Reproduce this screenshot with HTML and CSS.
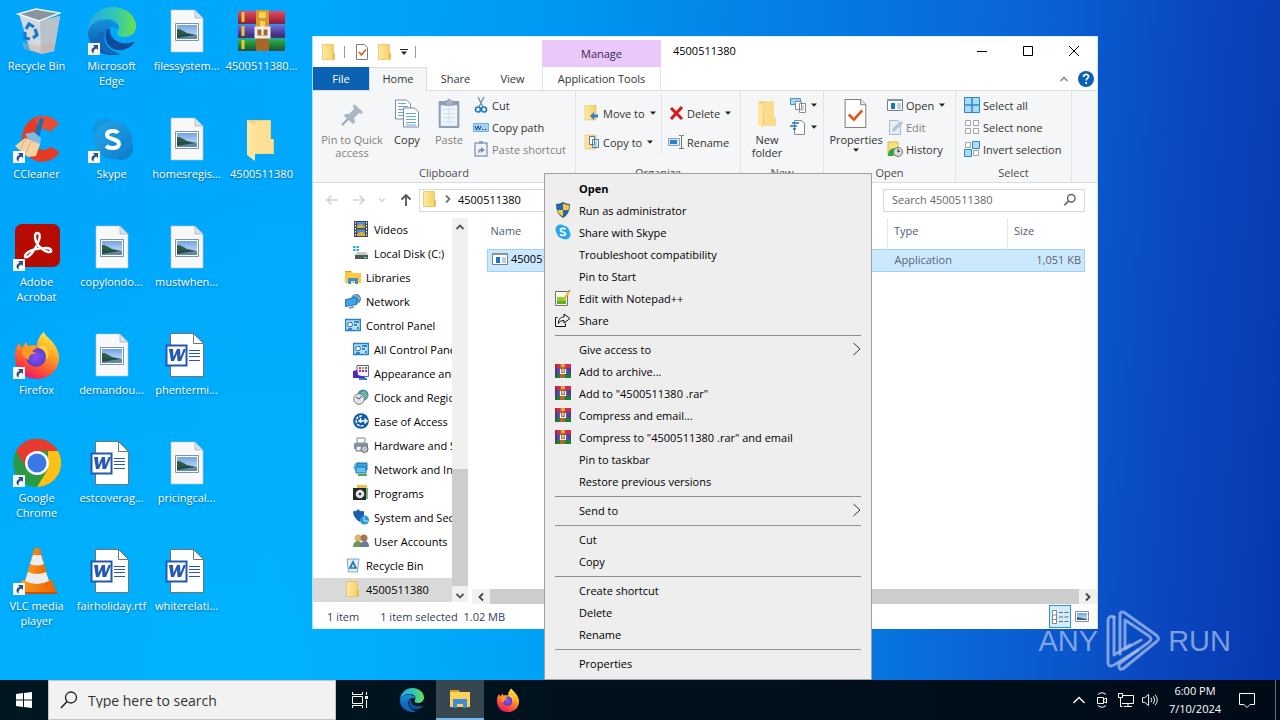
FILE: index.html
```html
<!DOCTYPE html>
<html lang="en">
<head>
<meta charset="utf-8">
<title>4500511380</title>
<link rel="stylesheet" href="styles.css">
</head>
<body>
<svg class="defs" aria-hidden="true">
  <defs>
    <linearGradient id="gFolder" x1="0" x2="1"><stop offset="0" stop-color="#ffe9a2"/><stop offset="1" stop-color="#f5cf62"/></linearGradient>
    <linearGradient id="gEdgeTop" x1="0" x2="1"><stop offset="0" stop-color="#2aa9e4"/><stop offset=".55" stop-color="#2fc6b8"/><stop offset="1" stop-color="#6be04a"/></linearGradient>
    <linearGradient id="gEdgeLow" x1="0" y1="0" x2="0" y2="1"><stop offset="0" stop-color="#1590dc"/><stop offset="1" stop-color="#0b4fa0"/></linearGradient>
    <linearGradient id="gFire" x1=".8" y1="0" x2=".3" y2="1"><stop offset="0" stop-color="#fff24a"/><stop offset=".4" stop-color="#ffa322"/><stop offset=".75" stop-color="#ff4a38"/><stop offset="1" stop-color="#e91574"/></linearGradient>
    <radialGradient id="gGlobe"><stop offset="0" stop-color="#8a4dff"/><stop offset="1" stop-color="#5b3fc4"/></radialGradient>
    <linearGradient id="gSkype" x1="0" y1="0" x2="1" y2="1"><stop offset="0" stop-color="#22a7ea"/><stop offset="1" stop-color="#0d7ccc"/></linearGradient>
    <linearGradient id="gSky" x1="0" y1="0" x2="0" y2="1"><stop offset="0" stop-color="#6fa4e4"/><stop offset="1" stop-color="#dceafa"/></linearGradient>
    <linearGradient id="gRed" x1="0" y1="0" x2="0" y2="1"><stop offset="0" stop-color="#e0506a"/><stop offset="1" stop-color="#96122e"/></linearGradient>
    <linearGradient id="gViolet" x1="0" y1="0" x2="0" y2="1"><stop offset="0" stop-color="#7a6ad8"/><stop offset="1" stop-color="#33206e"/></linearGradient>
    <linearGradient id="gGreen" x1="0" y1="0" x2="0" y2="1"><stop offset="0" stop-color="#38b04c"/><stop offset="1" stop-color="#0d5a24"/></linearGradient>
    <linearGradient id="gCone" x1="0" x2="1"><stop offset="0" stop-color="#ff9a1e"/><stop offset="1" stop-color="#e76400"/></linearGradient>
  </defs>
  <symbol id="arrow" viewBox="0 0 12 12"><path d="M0 0h12v12H0z" fill="#f6f8fa"/><path d="M5 2h5v5L8.300 5.500C6 6.500 5.300 8 5.600 10.500 2.800 9 2.600 5.500 6.600 3.700z" fill="#2d5086"/></symbol>
  <symbol id="bin" viewBox="0 0 48 48"><path d="M6 7l11 36 12 4 12-3 6-35-20 5z" fill="#d3d9de"/><path d="M27 14l20-5-6 35-13 3z" fill="#b9c1c9"/><path d="M5 7l18-5 24 4-21 8z" fill="#86959f" stroke="#f0f5f8" stroke-width="1.500"/><path d="M9 35l17 4 16-3-1 6-13 5-17-5z" fill="#cdb09f" opacity=".45"/><g fill="none" stroke="#1579cd" stroke-width="3.200"><path d="M13 22l3-5 5 3"/><path d="M22 22l2 6-4 3"/><path d="M17 32l-5-1 0-6"/></g></symbol>
  <symbol id="edge" viewBox="0 0 48 48"><path d="M0 25C0 10 11 0 25 0c13 0 23 9 23 19 0 7-5 11-12 11-5 0-7-2-7-4 0-2 2-3 2-6 0-4-5-8-12-8C9 12 2 17 0 25z" fill="url(#gEdgeTop)"/><path d="M0 25c2-8 9-12 17-12 9 0 14 5 14 9-6-5-15-1-15 8 0 8 7 15 17 17-4 1-7 1-9 1C10 48 0 38 0 25z" fill="url(#gEdgeLow)"/><path d="M19 22c-5 11 3 23 15 21 5-1 9-3 12-7 1-1 0-2-1-1-12 4-24-2-23-13z" fill="#0f4d98"/><path d="M17 25c-2 9 1 18 13 22-10 2-20-4-21-13-.600-5 3-9 8-9z" fill="#1169be"/></symbol>
  <symbol id="photo" viewBox="0 0 48 48"><path d="M8 3h24l8 8v34H8z" fill="#f8f8f9" stroke="#b9c3cb" stroke-width=".600"/><path d="M32 3v8h8z" fill="#d4e2ee" stroke="#a5b3be" stroke-width=".800"/><path d="M12.500 16.500h23v17h-23z" fill="#fff" stroke="#7e94ac"/><path d="M14 18h20v14H14z" fill="url(#gSky)"/><path d="M14 22c4 0 6 2 10 4l10 2v1H14z" fill="#2c5a48"/><path d="M14 28h20v4H14z" fill="#5f8ba6"/><path d="M14 27l18 1-18 3z" fill="#244c44"/></symbol>
  <symbol id="doc" viewBox="0 0 48 48"><path d="M7.500 2.500h23l10 10v33h-33z" fill="#fff" stroke="#6f7479"/><path d="M30.500 2.500v10h10z" fill="#fff" stroke="#6f7479"/><path d="M3.500 14.500h20v20h-20z" fill="#fff" stroke="#2458b3" stroke-width="2"/><path d="M6 18h4l.500 8 3.500-8h3l.500 8 3-8h2.500l-5 12h-3.500l-.500-7-3 7H8z" fill="#2458b3"/><path d="M26 19.500h11M26 22.500h11M26 25.500h11M26 29.500h11" stroke="#2458b3"/></symbol>
  <symbol id="rar" viewBox="0 0 48 48"><path d="M0 4h47v13H0z" fill="url(#gRed)"/><path d="M0 18h47v13H0z" fill="url(#gViolet)"/><path d="M0 32h47v12H0z" fill="url(#gGreen)"/><path d="M0 16h47M0 30h47M0 43h47" stroke="#5a4256"/><path d="M5 5v10M5 19v10M5 33v9" stroke="#e8c92a" stroke-width="3"/><path d="M18 3h13v41H18z" fill="#a9662a"/><path d="M18 3h13v19H18z" fill="#d69a2c"/><path d="M21 5h7v6h-7zM22 14h5v5h-5z" fill="#f4d05a"/><path d="M18 21h13v9H18z" fill="none" stroke="#eee" stroke-width="3"/><path d="M24.500 19v9" stroke="#fff" stroke-width="2"/></symbol>
  <symbol id="rar16" viewBox="0 0 16 16"><path d="M0 1h16v4H0z" fill="#d42a4f"/><path d="M0 5h16v6H0z" fill="#4a4ba6"/><path d="M0 11h16v4H0z" fill="#12853c"/><path d="M5 1h5v14H5z" fill="#b3652c"/><path d="M1 1v14M15 5v6" stroke="#6e2746"/><path d="M5.500 6v4.500h5V6M8 6v3" stroke="#fff" stroke-width="1.200" fill="none"/><path d="M6 1h4v3H6z" fill="#e8a242"/></symbol>
  <symbol id="cclean" viewBox="0 0 48 48"><path d="M46 9L37 17c-7-7-16-2-16 7 0 10 9 14 17 8l9 5C36 54 9 48 9 25 9 0 35-6 46 9z" fill="#e43a26"/><path d="M46 9L37 17c-4-4-8-4-11-2L22 3c8-4 18-2 24 6z" fill="#f05a3e" opacity=".6"/><path d="M27 3l4 1-6 22-6-2z" fill="#1c6fae"/><path d="M12 19l9-2 7 6-1 7-10-2z" fill="#83b7dd"/><path d="M2 31l10-8 15 6-4 12-8 1z" fill="#f5d2a0"/><path d="M12 24l-4 10M18 26l-5 12" stroke="#dfb27c"/></symbol>
  <symbol id="skype" viewBox="0 0 48 48"><circle cx="17" cy="16" r="12" fill="#1496dc"/><circle cx="33" cy="33" r="12" fill="#1281cb"/><circle cx="25" cy="25" r="19" fill="url(#gSkype)"/><path d="M30 18c-2-3-11-3-11 2 0 5 12 3 12 9 0 5-10 5-13 2" fill="none" stroke="#fff" stroke-width="4"/></symbol>
  <symbol id="folderBig" viewBox="0 0 48 48"><path d="M9 5h24v19h3v15H14z" fill="#f3cf70"/><path d="M17 6h15v18h3v14l-18 1z" fill="#fbe095"/><path d="M9 5l8 5v36l-8-6z" fill="#ffe69c"/></symbol>
  <symbol id="newFolder" viewBox="0 0 26 30"><path d="M4 3h16v16h2v8H7z" fill="#f0c45c"/><path d="M9 3h11v16h2v8H10z" fill="#fadd8c"/><path d="M4 3l5 3v24l-5-4z" fill="#ffe69c"/></symbol>
  <symbol id="acrobat" viewBox="0 0 48 48"><rect x="2" y="1" width="45" height="43" rx="7" fill="#b50b00"/><path d="M24 10c6 0 1 12-5 20-5 6-9 5-6 1 3-4 13-6 20-6 6 0 7 5 2 4-7-2-13-9-13-15 0-3 1-4 2-4z" fill="none" stroke="#fff" stroke-width="2.400"/></symbol>
  <symbol id="firefox" viewBox="0 0 48 48"><path d="M31 1c2 5 6 6 10 12 5 7 7 15 3 23-4 8-12 12-20 12C10 48 1 37 2 24c0-6 2-9 4-12l3 5 4-6 2 5c4-2 7-2 9-1 0-6 3-11 7-14z" fill="url(#gFire)"/><circle cx="23" cy="26" r="10" fill="url(#gGlobe)"/><path d="M10 16c5-2 10-2 14 1l-5 3 5 3c-6-1-9 2-8 6-6-2-8-7-6-13z" fill="#ff9a20"/><path d="M24 17c7 0 10 5 9 12 4-4 3-13-3-15z" fill="#ffcf39"/></symbol>
  <symbol id="chrome" viewBox="0 0 48 48"><circle cx="24" cy="24" r="24" fill="#2b9a47"/><path d="M3 12A24 24 0 0 1 45 12H24L14 30z" fill="#e63b2e"/><path d="M45 12A24 24 0 0 1 24 48l11-18V12z" fill="#fbc116"/><circle cx="24" cy="24" r="12" fill="#fff"/><circle cx="24" cy="24" r="9.500" fill="#3b78e7"/></symbol>
  <symbol id="vlc" viewBox="0 0 48 48"><path d="M9 33h30l5 13H4z" fill="url(#gCone)"/><path d="M21 2q3-3 6 0l10 36q-13 7-26 0z" fill="url(#gCone)"/><path d="M20 8h8l3 9q-7 3-14 0zM15 25q9 4 18 0l3 9q-12 6-24 0z" fill="#ececec"/><path d="M4 45h40v2H4z" fill="#ce5200"/></symbol>

  <symbol id="folder" viewBox="0 0 16 16"><path d="M1.500 .500h11v9h1v6h-12z" fill="url(#gFolder)" stroke="#e4bc52" stroke-width=".700"/><path d="M12.500 9v6" stroke="#dcae3b"/></symbol>
  <symbol id="check" viewBox="0 0 16 16"><path d="M2.500.500h8l3 3v12h-11z" fill="#fff" stroke="#7c7c7c"/><path d="M5 8l2.500 3L12 5.500" fill="none" stroke="#e0561f" stroke-width="1.600"/></symbol>
  <symbol id="checkBig" viewBox="0 0 24 30"><path d="M1.500 1.500h15l5 5v22h-20z" fill="#fff" stroke="#828282"/><path d="M16.500 1.500v5h5" fill="#eee" stroke="#828282"/><path d="M5 16l5 5 8-9" fill="none" stroke="#e65420" stroke-width="2.500"/></symbol>
  <symbol id="pin" viewBox="0 0 24 24"><path d="M14 1l9 8-2 2-2-1-5 5 1 4-2 2-9-8 1-2h4l5-5-1-3z" fill="#a9b6c4"/><path d="M8 16l-6 6" stroke="#97a5b4" stroke-width="2"/></symbol>
  <symbol id="copy" viewBox="0 0 26 30"><g fill="#fff" stroke="#7a8aa0"><path d="M1.500 1.500h11l4 4v15h-15z"/><path d="M9.500 9.500h11l4 4v15h-15z"/></g><path d="M4 5h8M4 8h10M4 11h5M4 14h5M4 17h5M12 15h10M12 18h10M12 21h10M12 24h10M12 26.500h10" stroke="#68a3df"/></symbol>
  <symbol id="paste" viewBox="0 0 24 30"><rect x="2" y="3" width="20" height="26" rx="1" fill="#8d9fb6"/><path d="M4 7h16v20H4z" fill="#eef4fb"/><path d="M8 3h2q2-4 4 0h2v4H8z" fill="#a5b3c4" stroke="#7b8da4" stroke-width=".700"/><path d="M6 11h12M6 15h12M6 19h12M6 23h12M12 8v18" stroke="#cfdbe8" stroke-width=".800"/></symbol>
  <symbol id="cut" viewBox="0 0 16 16"><path d="M5 0l5 10M11 0L6 10" stroke="#8997a5" stroke-width="1.500"/><circle cx="5" cy="12.500" r="2.500" fill="none" stroke="#1c7cc9" stroke-width="1.700"/><circle cx="11" cy="12.500" r="2.500" fill="none" stroke="#1c7cc9" stroke-width="1.700"/></symbol>
  <symbol id="path" viewBox="0 0 16 16"><path d="M.500 4.500h15v8H.500z" fill="#a5d4f7" stroke="#74aee0"/><path d="M2 7l1.500 4L5 7l1.500 4L8 7M9 10.500h1.500M12 10.500h1.500" fill="none" stroke="#1b4b80"/></symbol>
  <symbol id="pasteLink" viewBox="0 0 16 16"><path d="M2 2h12v13H2z" fill="#f0f4f9" stroke="#8fa1b8" stroke-width="1.500"/><path d="M6 0h4v3H6z" fill="#8fa1b8"/><path d="M5 13c0-4 1-5 3-5V6l4 3-4 3v-2c-1 0-2 1-3 3z" fill="#7890b0"/></symbol>
  <symbol id="moveTo" viewBox="0 0 16 16"><path d="M1 0h11v15H1z" fill="url(#gFolder)" stroke="#e1c067" stroke-width=".600"/><path d="M6 11l4-4v2.500h4v3h-4V15z" fill="#2e7fd2"/></symbol>
  <symbol id="copyTo" viewBox="0 0 16 16"><path d="M1 1h11v14H1z" fill="url(#gFolder)" stroke="#e1c067" stroke-width=".600"/><path d="M5.500 2.500h5v8h-5zM8.500 5.500h6v8h-6z" fill="#fff" stroke="#4c7eb4"/><path d="M10 8h3M10 10h3M10 12h3" stroke="#5d9bd8"/></symbol>
  <symbol id="del" viewBox="0 0 16 16"><path d="M3 3l11 11M14 2L3 14" stroke="#d9151f" stroke-width="3"/></symbol>
  <symbol id="rename" viewBox="0 0 16 16"><path d="M.500 4.500h11v7H.500z" fill="#d6e9fa" stroke="#8aa6c0"/><path d="M2 6h7v4H2z" fill="#2b7bd0"/><path d="M13.500 2v12M11 1.500h2l.500.500.500-.500h2M11 14.500h5" stroke="#6e7478" fill="none"/></symbol>
  <symbol id="newItem" viewBox="0 0 16 16"><path d="M.500 1.500h10v6H.500z" fill="#a9d3f3" stroke="#4d92c8"/><path d="M5.500 4.500h6v8h-6zM9.500 6.500h6v9h-6z" fill="#fff" stroke="#858b90"/><path d="M11 9h3M11 11h3M11 13h3" stroke="#aaa"/></symbol>
  <symbol id="easy" viewBox="0 0 16 16"><path d="M4.500 1.500h7l3 3v11h-10z" fill="#fff" stroke="#858b90"/><path d="M2 4h7M0 7h7M3 10h3" stroke="#1e70bf" stroke-width="1.300"/></symbol>
  <symbol id="app" viewBox="0 0 16 16"><path d="M.500 2.500h15v11H.500z" fill="#fff" stroke="#777f86"/><path d="M0 2h16v2H0z" fill="#8a949c"/><path d="M4 6h4v6H4z" fill="#1777cf"/><path d="M10 7h4M10 9h4M10 11h4" stroke="#7da0c0"/></symbol>
  <symbol id="edit" viewBox="0 0 16 16"><path d="M2.500 1.500h8l3 3v11h-11z" fill="#e5edf6" stroke="#aab9c9"/><path d="M5 13l1-4 8-7 2 2-8 8z" fill="#b5c4d4"/></symbol>
  <symbol id="history" viewBox="0 0 16 16"><path d="M1 1h10v13H1z" fill="#f6e37a" stroke="#d8b84c"/><path d="M1 15c0-5 2-8 8-8l-3 8z" fill="#28a745"/><circle cx="11" cy="11" r="4.500" fill="#d8dcda" stroke="#6c7675"/><path d="M11 8v3l2-1" stroke="#333" fill="none"/></symbol>
  <symbol id="selAll" viewBox="0 0 16 16"><path d="M.500.500h7.500v7.500H.500zM8 .500h7.500v7.500H8zM.500 8h7.500v7.500H.500zM8 8h7.500v7.500H8z" fill="#a9dcf9" stroke="#2e86c6"/></symbol>
  <symbol id="selNone" viewBox="0 0 16 16"><path d="M1.500 1.500h5v5h-5zM9.500 1.500h5v5h-5zM1.500 9.500h5v5h-5zM9.500 9.500h5v5h-5z" fill="#fff" stroke="#a3a3a3"/></symbol>
  <symbol id="selInv" viewBox="0 0 16 16"><path d="M1.500 1.500h5v5h-5zM9.500 9.500h5v5h-5z" fill="#fff" stroke="#a3a3a3"/><path d="M8.500.500h7v7h-7zM.500 8.500h7v7h-7z" fill="#a9dcf9" stroke="#2e86c6"/></symbol>

  <symbol id="videos" viewBox="0 0 16 16"><path d="M1 0h14v16H1z" fill="#45484e"/><path d="M4 1h8v6H4z" fill="#4b8fe0"/><path d="M4 5l4-2 4 3v1H4zM4 13l4-3 4 2v3H4z" fill="#d9b13a"/><path d="M4 8.500h8V12l-4-2-4 3z" fill="#4b8fe0"/><path d="M2.500 1v14M13.500 1v14" stroke="#fff" stroke-dasharray="1.500 1.500"/></symbol>
  <symbol id="disk" viewBox="0 0 16 16"><path d="M0 1h2.500v2H0zM3.500 1H6v2H3.500zM0 4h2.500v2H0zM3.500 4H6v2H3.500z" fill="#21b5c8"/><path d="M4 7h9l2 3H2z" fill="#c3c9ce"/><path d="M2 10h13v4H2z" fill="#50585e"/><path d="M11 12.500h3" stroke="#6be37a"/></symbol>
  <symbol id="lib" viewBox="0 0 16 16"><path d="M0 2h6l1 2h9v10H0z" fill="#fac93e"/><path d="M0 2h6l1 1H0z" fill="#d99d20"/><path d="M3 9h10v6h-3v-3H6v3H3z" fill="#3f8fd6"/></symbol>
  <symbol id="net" viewBox="0 0 16 16"><circle cx="11" cy="6" r="5" fill="#5b93b4"/><path d="M9 2c3 1 4 4 6 3" stroke="#b9dcec" fill="none"/><path d="M.500 6.500l11-2v7l-11 2z" fill="#3fa5e8" stroke="#2277b3"/><path d="M4 15l5-1" stroke="#6e8797" stroke-width="1.500"/></symbol>
  <symbol id="cpl" viewBox="0 0 16 16"><path d="M.500 2.500h15v11H.500z" fill="#b4e2fb" stroke="#2683be" stroke-width="1.500"/><circle cx="5" cy="7.500" r="2.500" fill="#eef" stroke="#1d6ca6"/><path d="M9 5h5M9 8h3M12 11h2M3 12h4" stroke="#176aab" stroke-width="1.500"/></symbol>
  <symbol id="appear" viewBox="0 0 16 16"><path d="M4 .500h11.500v11H4z" fill="#f1f4fc" stroke="#5268bb"/><path d="M6 2h2v2H6z" fill="#e33"/><path d="M9 2h2v2H9z" fill="#f90"/><path d="M12 2h2v2h-2z" fill="#393"/><path d="M6 5h2v2H6zM9 5h2v2H9zM12 5h2v2h-2z" fill="#93c"/><path d="M0 6l4-1 1 5 7 2v1H0z" fill="#5427b8"/><path d="M6 14h8" stroke="#2d84d0" stroke-width="2"/></symbol>
  <symbol id="clockI" viewBox="0 0 16 16"><circle cx="10" cy="6" r="5.500" fill="#388abb"/><path d="M7 3l5-1 3 5-3 3z" fill="#76b68c"/><circle cx="6" cy="10" r="5.300" fill="#dfe5e9" stroke="#7a8288"/><path d="M3 8l3 2 3-3" fill="none" stroke="#30485c"/></symbol>
  <symbol id="ease" viewBox="0 0 16 16"><circle cx="8" cy="8" r="7.800" fill="#0b59a8"/><path d="M7.500 5v5M5 8h9M11.500 5.500L14 8l-2.500 2.500" stroke="#fff" stroke-width="1.500" fill="none"/><path d="M9 3a5 5 0 1 0 1.500 9.300" fill="none" stroke="#fff" stroke-width="1.500" stroke-dasharray="3 1"/></symbol>
  <symbol id="printer" viewBox="0 0 16 16"><path d="M4 1h8v5H4z" fill="#fff" stroke="#7b8790"/><path d="M1 6h14v6H1z" fill="#8c959c"/><path d="M3 9h9v5H3z" fill="#eceff1" stroke="#697279"/><circle cx="11.500" cy="12" r="3.500" fill="#bbc4ca" stroke="#606a72"/></symbol>
  <symbol id="netInt" viewBox="0 0 16 16"><circle cx="5" cy="6" r="4.500" fill="#72b6dc"/><path d="M4 2h10v7H4z" fill="#3ba3e3" stroke="#1d75b1"/><path d="M3 6h10v6H3z" fill="#64c0ef" stroke="#1d75b1"/><path d="M5 14h9" stroke="#46ad55" stroke-width="2"/></symbol>
  <symbol id="programs" viewBox="0 0 16 16"><path d="M4 0h10v10H4z" fill="#f2bd51"/><path d="M0 3h13v12H0z" fill="#25292b"/><circle cx="7" cy="9" r="4.300" fill="#dde4e3"/><circle cx="7" cy="9" r="1.300" fill="#25292b"/><path d="M14 3v11" stroke="#43a662" stroke-width="1.500"/></symbol>
  <symbol id="system" viewBox="0 0 16 16"><path d="M0 2q4 1 5-2 2 3 6 2 1 7-4 11-7-4-7-11z" fill="#185fad"/><circle cx="11.500" cy="11" r="4.500" fill="#2799d9"/><path d="M11 8v4h4" stroke="#c6ecff" fill="none"/></symbol>
  <symbol id="users" viewBox="0 0 16 16"><circle cx="5" cy="5" r="3.500" fill="#d9b775"/><circle cx="11" cy="5" r="3.500" fill="#a77450"/><path d="M0 14q0-6 5-6 4 0 4 6z" fill="#6b9c4a"/><path d="M7 14q0-6 5-6 4 0 4 6z" fill="#6d7a9e"/></symbol>
  <symbol id="binS" viewBox="0 0 16 16"><path d="M2 2h12l-1.500 13h-9z" fill="#e2edf5" stroke="#8ea5b5"/><path d="M8 5l3 6H5z" fill="none" stroke="#2178c5" stroke-width="1.700"/></symbol>

  <symbol id="shield" viewBox="0 0 16 16"><path d="M8 0q3 2 7 2 0 10-7 14Q1 12 1 2q4 0 7-2z" fill="#345979"/><path d="M8 1.500V8H2.500Q2 5 2 3q3 0 6-1.500zM8 8h5.500Q12 12 8 14.500z" fill="#1c69ba"/><path d="M8 1.500Q11 3 14 3q0 3-.500 5H8zM2.500 8H8v6.500Q3 12 2.500 8z" fill="#fcc53b"/></symbol>
  <symbol id="skypeS" viewBox="0 0 16 16"><circle cx="5.500" cy="5.500" r="5" fill="#28a8ea"/><circle cx="10.500" cy="10.500" r="5" fill="#28a8ea"/><circle cx="8" cy="8" r="6.500" fill="#28a8ea"/><path d="M10.500 5.500c-1-1.500-5-1.500-5 .700 0 2.300 5 1.200 5 3.600 0 2.200-4 2.200-5.300.500" fill="none" stroke="#fff" stroke-width="1.700"/></symbol>
  <symbol id="npp" viewBox="0 0 16 16"><path d="M.500 1.500h12v14H.500z" fill="#fafbe9" stroke="#717b72"/><path d="M2 7h9v7H2z" fill="#8ed032"/><path d="M2 11h9v3H2z" fill="#5fae26"/><path d="M1 1.500h11" stroke="#555" stroke-dasharray="1 1"/><path d="M8 9l5-8 2 1-5 8z" fill="#f0b43c"/><path d="M13 1l2-1v2z" fill="#b0342a"/></symbol>
  <symbol id="share" viewBox="0 0 16 16"><path d="M2.500 5.500h-2v9h10v-3M9 2l6 4.500L9 11V8.500C6 8.500 4.500 9.500 3.500 11.500 3.500 7.500 5 5 9 5z" fill="none" stroke="#111"/></symbol>
  <symbol id="mag" viewBox="0 0 16 16"><circle cx="9.500" cy="6" r="4.300" fill="none" stroke="currentColor" stroke-width="1.600"/><path d="M6.500 9L1.500 14" stroke="currentColor" stroke-width="2"/></symbol>
  <symbol id="up" viewBox="0 0 10 10"><path d="M1.500 7L5 3.500 8.500 7" fill="none" stroke="currentColor" stroke-width="1.800"/></symbol>
  <symbol id="down" viewBox="0 0 10 10"><path d="M1.500 3L5 6.500 8.500 3" fill="none" stroke="currentColor" stroke-width="1.800"/></symbol>
  <symbol id="left" viewBox="0 0 10 10"><path d="M7 1.500L3.500 5 7 8.500" fill="none" stroke="currentColor" stroke-width="1.800"/></symbol>
  <symbol id="right" viewBox="0 0 10 10"><path d="M3 1.500L6.500 5 3 8.500" fill="none" stroke="currentColor" stroke-width="1.800"/></symbol>
  <symbol id="sub" viewBox="0 0 8 14"><path d="M.500 1L7 7 .500 13" fill="none" stroke="#333"/></symbol>
  <symbol id="caret" viewBox="0 0 6 4"><path d="M0 .500h6L3 3.800z" fill="#222"/></symbol>
</svg>

<div class="screen">
  <main class="desktop">
    <ul class="icons">
      <li><a href="#"><span class="pic"><svg><use href="#bin"/></svg></span>Recycle Bin</a></li>
      <li><a href="#"><span class="pic"><svg><use href="#cclean"/></svg><svg class="link"><use href="#arrow"/></svg></span>CCleaner</a></li>
      <li><a href="#"><span class="pic"><svg><use href="#acrobat"/></svg><svg class="link"><use href="#arrow"/></svg></span>Adobe Acrobat</a></li>
      <li><a href="#"><span class="pic"><svg><use href="#firefox"/></svg><svg class="link"><use href="#arrow"/></svg></span>Firefox</a></li>
      <li><a href="#"><span class="pic"><svg><use href="#chrome"/></svg><svg class="link"><use href="#arrow"/></svg></span>Google Chrome</a></li>
      <li><a href="#"><span class="pic"><svg><use href="#vlc"/></svg><svg class="link"><use href="#arrow"/></svg></span>VLC media player</a></li>
      <li><a href="#"><span class="pic"><svg><use href="#edge"/></svg><svg class="link"><use href="#arrow"/></svg></span>Microsoft Edge</a></li>
      <li><a href="#"><span class="pic"><svg><use href="#skype"/></svg><svg class="link"><use href="#arrow"/></svg></span>Skype</a></li>
      <li><a href="#"><span class="pic"><svg><use href="#photo"/></svg></span>copylondo...</a></li>
      <li><a href="#"><span class="pic"><svg><use href="#photo"/></svg></span>demandou...</a></li>
      <li><a href="#"><span class="pic"><svg><use href="#doc"/></svg></span>estcoverag...</a></li>
      <li><a href="#"><span class="pic"><svg><use href="#doc"/></svg></span>fairholiday.rtf</a></li>
      <li><a href="#"><span class="pic"><svg><use href="#photo"/></svg></span>filessystem...</a></li>
      <li><a href="#"><span class="pic"><svg><use href="#photo"/></svg></span>homesregis...</a></li>
      <li><a href="#"><span class="pic"><svg><use href="#photo"/></svg></span>mustwhen...</a></li>
      <li><a href="#"><span class="pic"><svg><use href="#doc"/></svg></span>phentermi...</a></li>
      <li><a href="#"><span class="pic"><svg><use href="#photo"/></svg></span>pricingcal...</a></li>
      <li><a href="#"><span class="pic"><svg><use href="#doc"/></svg></span>whiterelati...</a></li>
      <li><a href="#"><span class="pic"><svg><use href="#rar"/></svg></span>4500511380...</a></li>
      <li><a href="#"><span class="pic"><svg><use href="#folderBig"/></svg></span>4500511380</a></li>
    </ul>

    <section class="window">
      <header class="titlebar">
        <div class="quick">
          <svg class="i16"><use href="#folder"/></svg><i class="bar"></i>
          <button class="icon" aria-label="Properties"><svg class="i16"><use href="#check"/></svg></button>
          <button class="icon" aria-label="New folder"><svg class="i16"><use href="#folder"/></svg></button>
          <button class="icon" aria-label="Customize"><svg class="cust" viewBox="0 0 8 6"><path d="M0 .500h8" stroke="#222"/><path d="M1 2.500h6L4 6z" fill="#222"/></svg></button><i class="bar"></i>
        </div>
        <div class="manage">Manage</div>
        <h1>4500511380</h1>
        <div class="winctl">
          <button aria-label="Minimize"><svg viewBox="0 0 12 12"><path d="M1 6.500h10" stroke="#000"/></svg></button>
          <button aria-label="Maximize"><svg viewBox="0 0 12 12"><path d="M1.500 1.500h9v9h-9z" fill="none" stroke="#000"/></svg></button>
          <button aria-label="Close"><svg viewBox="0 0 12 12"><path d="M1 1l10 10M11 1L1 11" stroke="#000"/></svg></button>
        </div>
      </header>
      <nav class="tabs">
        <button class="file">File</button><button class="home">Home</button><button class="tab">Share</button><button class="tab">View</button>
        <button class="tools">Application Tools</button>
        <div class="help"><svg class="i10"><use href="#up"/></svg><svg class="i16" viewBox="0 0 16 16"><circle cx="8" cy="8" r="8" fill="#0a62b8"/><path d="M5.500 6c0-3.500 5-3.300 5-.500 0 1.800-2.300 1.800-2.300 4M8.200 11v2" stroke="#fff" stroke-width="1.700" fill="none"/></svg></div>
      </nav>
      <div class="ribbon">
        <div class="group g-clip">
          <div class="tools-row">
            <button class="big off wide"><svg class="pinpic"><use href="#pin"/></svg>Pin to Quick access</button>
            <button class="big"><svg><use href="#copy"/></svg>Copy</button>
            <button class="big off narrow"><svg><use href="#paste"/></svg>Paste</button>
            <div class="stack"><button><svg><use href="#cut"/></svg>Cut</button><button><svg><use href="#path"/></svg>Copy path</button><button class="off"><svg><use href="#pasteLink"/></svg>Paste shortcut</button></div>
          </div>
          <div class="cap">Clipboard</div>
        </div>
        <div class="group g-org">
          <div class="tools-row">
            <div class="stack two first"><button><svg><use href="#moveTo"/></svg>Move to<svg class="car"><use href="#caret"/></svg></button><button><svg><use href="#copyTo"/></svg>Copy to<svg class="car"><use href="#caret"/></svg></button></div>
            <div class="stack two"><button><svg><use href="#del"/></svg>Delete<svg class="car"><use href="#caret"/></svg></button><button><svg><use href="#rename"/></svg>Rename</button></div>
          </div>
          <div class="cap">Organize</div>
        </div>
        <div class="group g-new">
          <div class="tools-row">
            <button class="big"><svg><use href="#newFolder"/></svg>New folder</button>
            <div class="stack"><button aria-label="New item"><svg><use href="#newItem"/></svg><svg class="car"><use href="#caret"/></svg></button><button aria-label="Easy access"><svg><use href="#easy"/></svg><svg class="car"><use href="#caret"/></svg></button></div>
          </div>
          <div class="cap">New</div>
        </div>
        <div class="group g-open">
          <div class="tools-row">
            <button class="big props"><svg><use href="#checkBig"/></svg>Properties<svg class="car"><use href="#caret"/></svg></button>
            <div class="stack"><button><svg><use href="#app"/></svg>Open<svg class="car"><use href="#caret"/></svg></button><button class="off"><svg><use href="#edit"/></svg>Edit</button><button><svg><use href="#history"/></svg>History</button></div>
          </div>
          <div class="cap">Open</div>
        </div>
        <div class="group g-sel">
          <div class="tools-row">
            <div class="stack"><button><svg><use href="#selAll"/></svg>Select all</button><button><svg><use href="#selNone"/></svg>Select none</button><button><svg><use href="#selInv"/></svg>Invert selection</button></div>
          </div>
          <div class="cap">Select</div>
        </div>
      </div>
      <div class="address">
        <div class="moves">
          <button class="dim" aria-label="Back"><svg viewBox="0 0 14 14"><path d="M13 7H2M6.500 2.500L2 7l4.500 4.500" fill="none" stroke="currentColor" stroke-width="1.500"/></svg></button>
          <button class="dim" aria-label="Forward"><svg viewBox="0 0 14 14"><path d="M1 7h11M7.500 2.500L12 7l-4.500 4.500" fill="none" stroke="currentColor" stroke-width="1.500"/></svg></button>
          <button class="dim slim" aria-label="Recent"><svg><use href="#down"/></svg></button>
          <button aria-label="Up"><svg viewBox="0 0 14 14"><path d="M7 13V2M2.500 6.500L7 2l4.500 4.500" fill="none" stroke="#555" stroke-width="1.800"/></svg></button>
        </div>
        <div class="crumbs"><svg class="i16"><use href="#folder"/></svg><svg class="i10"><use href="#right"/></svg><span>4500511380</span></div>
        <label class="find"><input type="text" placeholder="Search 4500511380" aria-label="Search 4500511380"><svg class="i14"><use href="#mag"/></svg></label>
      </div>
      <div class="body">
        <ul class="tree">
          <li class="in"><a href="#"><svg><use href="#videos"/></svg>Videos</a></li>
          <li class="in"><a href="#"><svg><use href="#disk"/></svg>Local Disk (C:)</a></li>
          <li><a href="#"><svg><use href="#lib"/></svg>Libraries</a></li>
          <li><a href="#"><svg><use href="#net"/></svg>Network</a></li>
          <li><a href="#"><svg><use href="#cpl"/></svg>Control Panel</a></li>
          <li class="in"><a href="#"><svg><use href="#cpl"/></svg>All Control Panel Items</a></li>
          <li class="in"><a href="#"><svg><use href="#appear"/></svg>Appearance and Personalization</a></li>
          <li class="in"><a href="#"><svg><use href="#clockI"/></svg>Clock and Region</a></li>
          <li class="in"><a href="#"><svg><use href="#ease"/></svg>Ease of Access</a></li>
          <li class="in"><a href="#"><svg><use href="#printer"/></svg>Hardware and Sound</a></li>
          <li class="in"><a href="#"><svg><use href="#netInt"/></svg>Network and Internet</a></li>
          <li class="in"><a href="#"><svg><use href="#programs"/></svg>Programs</a></li>
          <li class="in"><a href="#"><svg><use href="#system"/></svg>System and Security</a></li>
          <li class="in"><a href="#"><svg><use href="#users"/></svg>User Accounts</a></li>
          <li><a href="#"><svg><use href="#binS"/></svg>Recycle Bin</a></li>
          <li class="on"><a href="#"><svg><use href="#folder"/></svg>4500511380</a></li>
        </ul>
        <div class="vbar"><svg class="i10"><use href="#up"/></svg><i></i><svg class="i10"><use href="#down"/></svg></div>
        <div class="files">
          <table>
            <thead><tr><th>Name</th><th class="type">Type</th><th class="size">Size</th></tr></thead>
            <tbody><tr><td class="name"><svg class="i16"><use href="#app"/></svg>4500511380</td><td>Application</td><td class="num">1,051 KB</td></tr></tbody>
          </table>
          <div class="hbar"><svg class="i10"><use href="#left"/></svg><i></i><svg class="i10"><use href="#right"/></svg></div>
        </div>
      </div>
      <footer class="status">
        <span>1 item</span><span class="sel">1 item selected&nbsp; 1.02 MB</span>
        <button class="view on" aria-label="Details"><svg viewBox="0 0 18 16"><path d="M1.500 1.500h4v13h-4zM1.500 6h4M1.500 10.500h4" stroke="#888" fill="#fff"/><path d="M8 3.500h4M13.500 3.500h4M8 8h4M13.500 8h4M8 12.500h4M13.500 12.500h4" stroke="#667"/></svg></button>
        <button class="view" aria-label="Large icons"><svg viewBox="0 0 18 16"><path d="M2.500 2.500h13v10h-13z" stroke="#8a8f96" fill="#fff"/><path d="M4 4h10v7H4z" fill="url(#gSky)"/><path d="M4 8l10 2v1H4z" fill="#3b6379"/></svg></button>
      </footer>
    </section>

    <div class="watermark"><span>ANY</span><svg viewBox="0 0 54 62"><g fill="none" stroke="currentColor" stroke-width="3" stroke-linejoin="round" stroke-linecap="round"><path d="M8 7Q2 5 2 11v41q0 6 6 3l24-15"/><path d="M8 7v38l16-10"/><path d="M14 44V5q0-5 5-2l31 22q5 4 0 7L18 58q-4 3-5-1v-3l30-22q4-3 0-6L19 10v29l16-9"/></g></svg><span>RUN</span></div>

    <menu class="context">
      <li><button class="bold">Open</button></li>
      <li><button><svg><use href="#shield"/></svg>Run as administrator</button></li>
      <li><button><svg><use href="#skypeS"/></svg>Share with Skype</button></li>
      <li><button>Troubleshoot compatibility</button></li>
      <li><button>Pin to Start</button></li>
      <li><button><svg><use href="#npp"/></svg>Edit with Notepad++</button></li>
      <li><button><svg><use href="#share"/></svg>Share</button></li>
      <li class="sep"></li>
      <li><button>Give access to<svg class="more"><use href="#sub"/></svg></button></li>
      <li><button><svg><use href="#rar16"/></svg>Add to archive...</button></li>
      <li><button><svg><use href="#rar16"/></svg>Add to "4500511380 .rar"</button></li>
      <li><button><svg><use href="#rar16"/></svg>Compress and email...</button></li>
      <li><button><svg><use href="#rar16"/></svg>Compress to "4500511380 .rar" and email</button></li>
      <li><button>Pin to taskbar</button></li>
      <li><button>Restore previous versions</button></li>
      <li class="sep"></li>
      <li><button>Send to<svg class="more"><use href="#sub"/></svg></button></li>
      <li class="sep"></li>
      <li><button>Cut</button></li>
      <li><button>Copy</button></li>
      <li class="sep"></li>
      <li><button>Create shortcut</button></li>
      <li><button>Delete</button></li>
      <li><button>Rename</button></li>
      <li class="sep"></li>
      <li><button>Properties</button></li>
    </menu>
  </main>

  <footer class="taskbar">
    <button aria-label="Start"><svg class="i16" viewBox="0 0 16 16"><path d="M0 2l7-1v6.500H0zM8 1l8-1v7.500H8zM0 8.500h7V15l-7-1zM8 8.500h8V16l-8-1z" fill="#fff"/></svg></button>
    <label class="search"><svg viewBox="0 0 18 18"><circle cx="11" cy="6.500" r="5.500" fill="none" stroke="#222" stroke-width="1.300"/><path d="M7 10.500L1 17" stroke="#222" stroke-width="1.500"/></svg><input type="text" placeholder="Type here to search" aria-label="Type here to search"></label>
    <button class="view-tasks" aria-label="Task View"><svg class="i16" viewBox="0 0 16 16"><path d="M.500 0v2.500h10V0M.500 4.500h10v7H.500zM.500 16v-2.500h10V16M14.500 0v3M14.500 8v8" fill="none" stroke="#fff"/><path d="M13 4h3v3h-3z" fill="#fff"/></svg></button>
    <button aria-label="Microsoft Edge"><svg class="i24"><use href="#edge"/></svg></button>
    <button class="active" aria-label="File Explorer"><svg class="i24" viewBox="0 0 24 24"><path d="M2 3h8l2 2h10v15H2z" fill="#ffd05c"/><path d="M2 3h8l2 2H2z" fill="#e29d17"/><path d="M5 12h14v9h-4v-4H9v4H5z" fill="#3d8ed4"/></svg></button>
    <button aria-label="Firefox"><svg class="i24"><use href="#firefox"/></svg></button>
    <div class="tray">
      <svg class="i14" viewBox="0 0 14 14"><path d="M1.500 10L7 4.500l5.500 5.500" fill="none" stroke="#fff" stroke-width="1.300"/></svg>
      <svg class="i16" viewBox="0 0 16 16"><path d="M3.500 5.500h6v6h-6zM9.500 7.500l3-1.500v5l-3-1.500M4 2.500Q8-1 12 2.500M4 13.500q4 3.500 8 0" fill="none" stroke="#fff"/></svg>
      <svg class="i16" viewBox="0 0 16 16"><path d="M4.500 3.500h11v8H4M10 11.500v3M6 14.500h8M.500 1.500h4v4h-4zM2.500 5.500v9h2" fill="none" stroke="#fff"/></svg>
      <svg class="i16 sound" viewBox="0 0 17 16"><path d="M.500 5.500h2.500l4-3.500v12L3 10.500H.500zM9.500 5.500q2 2.500 0 5M12 4q3 4 0 8M14 2.500q4.500 5.500 0 11" fill="none" stroke="#fff"/></svg>
      <div class="clock">6:00 PM<br>7/10/2024</div>
      <svg class="i16 note" viewBox="0 0 16 16"><path d="M.500 1.500h15v11H11l-3 3-3-3H.500z" fill="none" stroke="#fff"/></svg>
      <i></i>
    </div>
  </footer>
</div>
</body>
</html>
```
FILE: styles.css
```css
* { box-sizing: border-box; }
body { margin: 0; font: 11px/15px "Open Sans", "Noto Sans", sans-serif; color: #111; }
button, input { font: inherit; color: inherit; background: none; border: 0; padding: 0; margin: 0; }
button { display: flex; align-items: center; justify-content: center; white-space: nowrap; }
a { color: inherit; text-decoration: none; }
ul, menu { list-style: none; margin: 0; padding: 0; }
svg { display: block; flex: none; }
.defs { position: absolute; width: 0; height: 0; }
.i10 { width: 10px; height: 10px; }
.i14 { width: 14px; height: 14px; }
.i16 { width: 16px; height: 16px; }
.i24 { width: 24px; height: 24px; }

.screen { height: 100vh; display: flex; flex-direction: column; overflow: hidden; }
.desktop {
  position: relative; flex: 1; min-height: 0;
  background:
    radial-gradient(ellipse at 20% 100%, rgba(0, 190, 255, .5), rgba(0, 190, 255, 0) 50%),
    linear-gradient(94deg, #00a6fb 0, #00a9fd 24%, #0094f0 45%, #0a63d6 78%, #0a48c0 90%, #0638b0 100%);
}

/* Desktop shortcuts */
.icons {
  display: grid; grid-auto-flow: column; grid-template-rows: repeat(6, 108px);
  grid-auto-columns: 75px; width: max-content; padding-top: 7px;
}
.icons a { display: flex; flex-direction: column; align-items: center; gap: 3px; color: #fff; text-align: center; text-shadow: 0 1px 2px rgba(0, 40, 90, .6); padding: 0 5px 0 3px; }
.pic { position: relative; }
.pic svg { width: 48px; height: 48px; }
.pic .link { position: absolute; left: 0; bottom: 0; width: 12px; height: 12px; }

/* Explorer window */
.window { position: absolute; inset: 36px 182px 51px 312px; display: flex; flex-direction: column; background: #fff; border: 1px solid #a5e2fb; border-right-color: #d5e4f5; border-top-color: #d9f3fd; border-bottom: 0; }
.titlebar { display: flex; height: 30px; }
.quick { display: flex; align-items: center; width: 229px; padding-left: 8px; gap: 7px; }
.quick .bar { width: 1px; height: 12px; background: #999; margin-right: 2px; }
.cust { width: 8px; height: 6px; }
.manage { width: 119px; margin-top: 3px; background: #e9c9fa; text-align: center; line-height: 28px; color: #3c2450; }
h1 { flex: 1; margin: 0 0 0 12px; font-size: 11px; font-weight: 400; line-height: 28px; color: #000; }
.winctl { display: flex; }
.winctl button { width: 46px; height: 28px; }
.winctl svg { width: 12px; height: 12px; }
.tabs { display: flex; height: 24px; border-bottom: 1px solid #dadbdc; }
.tabs button { color: #333; }
.tabs .file { width: 56px; background: #0b62b3; color: #fff; }
.tabs .home { width: 58px; background: #f5f6f7; border: 1px solid #dadbdc; border-bottom: 0; margin-bottom: -1px; padding-bottom: 2px; }
.tabs .tab { width: 57px; }
.tabs .tools { width: 119px; margin-left: 1px; border: 1px solid #e9dff0; border-width: 0 1px; }
.help { display: flex; align-items: center; gap: 9px; margin-left: auto; padding-right: 3px; color: #9a9a9a; }
.ribbon { display: flex; height: 92px; background: #f5f6f7; border-bottom: 1px solid #dadbdc; color: #333; }
.group { display: flex; flex-direction: column; justify-content: space-between; border-right: 1px solid #e2e3e4; padding-top: 3px; }
.g-clip { width: 263px; }
.g-org { width: 165px; }
.g-new { width: 83px; }
.g-open { width: 132px; }
.g-sel { width: 116px; }
.tools-row { display: flex; }
.cap { text-align: center; line-height: 19px; color: #4c4c4c; }
.big { flex-direction: column; justify-content: flex-start; width: 52px; padding-top: 4px; line-height: 13px; white-space: normal; }
.big svg { width: 26px; height: 31px; margin-bottom: 4px; }
.big .pinpic { height: 24px; margin: 5px 0 6px; }
.wide { width: 68px; margin-left: 5px; }
.wide + .big { width: 42px; }
.narrow { width: 42px; margin-right: 3px; }
.off { color: #808080; }
.stack button { height: 22px; gap: 3px; }
.stack { display: flex; flex-direction: column; align-items: flex-start; }
.stack svg { width: 16px; height: 16px; }
.stack .car, .big .car { width: 6px; height: 4px; margin: 0 0 0 2px; }
.two { padding-top: 8px; gap: 7px; }
.first { margin: 0 6px 0 8px; border-right: 1px solid #e2e3e4; width: 78px; }
.g-new .stack { margin-left: -3px; }
.props { width: 62px; margin-left: 1px; white-space: nowrap; }
.big.props .car { margin: 2px 0 0; }
.g-sel .tools-row { padding-left: 8px; }

.address { display: flex; align-items: center; height: 34px; padding-right: 12px; }
.moves { display: flex; width: 106px; padding-left: 6px; }
.moves button { width: 28px; height: 22px; }
.moves .slim { width: 22px; }
.moves svg { width: 14px; height: 14px; }
.moves .slim svg { width: 8px; height: 8px; }
.moves .dim { color: #d2d2d2; }
.crumbs { flex: 1; display: flex; align-items: center; gap: 5px; height: 23px; border: 1px solid #d9d9d9; padding: 0 0 2px 2px; color: #000; margin-right: 12px; }
.crumbs .i10 { color: #777; }
.find { display: flex; align-items: center; width: 202px; height: 23px; border: 1px solid #d9d9d9; padding: 0 7px 1px 8px; color: #666; }
.find input { flex: 1; min-width: 0; }
input::placeholder { color: inherit; opacity: 1; }

.body { flex: 1; min-height: 0; display: flex; padding-top: 1px; }
.tree { width: 139px; overflow: hidden; color: #000; }
.tree a { display: flex; align-items: center; height: 24px; padding: 0 0 2px 32px; gap: 5px; white-space: nowrap; }
.tree .in a { padding-left: 40px; }
.tree svg { width: 16px; height: 16px; }
.tree .on { background: #d9d9d9; }
.vbar { display: flex; flex-direction: column; align-items: center; justify-content: space-between; width: 16px; background: #f0f0f0; padding: 4px 0 1px; color: #555; margin: 0 4px 2px 0; }
.vbar i { width: 16px; height: 117px; background: #cdcdcd; margin: auto 0 5px; }
.files { flex: 1; min-width: 0; display: flex; flex-direction: column; justify-content: space-between; }
table { border-collapse: collapse; width: calc(100% - 27px); margin-left: 15px; table-layout: fixed; }
th { height: 31px; padding: 0 0 5px 3px; text-align: left; font-weight: 400; color: #4c607a; }
.type, .size { border-left: 1px solid #e8e8e8; padding-left: 6px; }
.type { width: 120px; }
.size { width: 77px; }
td { height: 22px; background: #cce8ff; border: 1px solid #99d1ff; border-width: 1px 0; padding: 0 3px 2px 7px; color: #5a6470; }
td:first-child { border-left-width: 1px; }
td:last-child { border-right-width: 1px; }
.name { color: #000; }
.name svg { float: left; margin-right: 3px; }
td.name { padding-left: 4px; }
.num { text-align: right; }
.hbar { display: flex; align-items: center; height: 15px; background: #f0f0f0; color: #444; padding: 0 4px; gap: 4px; }
.hbar i { flex: 1; height: 15px; background: #cdcdcd; }
.status { display: flex; align-items: center; height: 25px; padding: 0 4px 0 14px; color: #33405e; }
.sel { margin: 0 auto 0 21px; }
.view { width: 22px; height: 23px; }
.view svg { width: 18px; height: 16px; }
.view.on { background: #d2ecfb; border: 1px solid #2f91cf; }

/* Context menu */
.context { position: absolute; left: 544px; bottom: 0; width: 328px; padding: 4px 10px; background: #eee; border: 1px solid #a0a0a0; color: #000; }
.context button { display: flex; justify-content: flex-start; position: relative; width: 100%; height: 22px; padding: 0 0 2px 24px; }
.context svg { position: absolute; left: 0; width: 16px; height: 16px; }
.context .more { left: auto; right: 0; width: 8px; height: 14px; }
.context .sep { height: 7px; padding-top: 3px; }
.context .sep::before { content: ""; display: block; height: 1px; background: #919191; }
.context .bold { font-weight: 700; }

.watermark { position: absolute; right: 49px; bottom: 8px; display: flex; align-items: center; gap: 8px; color: rgba(165, 190, 235, .75); font: 29px/62px "Liberation Sans", sans-serif; }
.watermark svg { width: 54px; height: 62px; }

/* Taskbar */
.taskbar { display: flex; height: 40px; background: linear-gradient(90deg, #001722, #000b18); color: #fff; }
.taskbar button { width: 48px; height: 40px; }
.search { display: flex; align-items: center; gap: 10px; width: 288px; background: #f2f2f2; border: 1px solid #c4c4c4; padding-left: 11px; color: #333; font-size: 14px; }
.search svg { width: 18px; height: 18px; }
.search input { flex: 1; min-width: 0; }
.taskbar .view-tasks { margin-right: 4px; }
.taskbar .active { background: #37474f; border-bottom: 2px solid #76b9ed; }
.tray { margin-left: auto; display: flex; align-items: center; gap: 8px; padding-right: 4px; }
.clock { text-align: center; line-height: 18px; width: 58px; }
.note { margin: 0 12px 0 7px; }
.tray i { width: 1px; height: 40px; background: #66717a; }
```
